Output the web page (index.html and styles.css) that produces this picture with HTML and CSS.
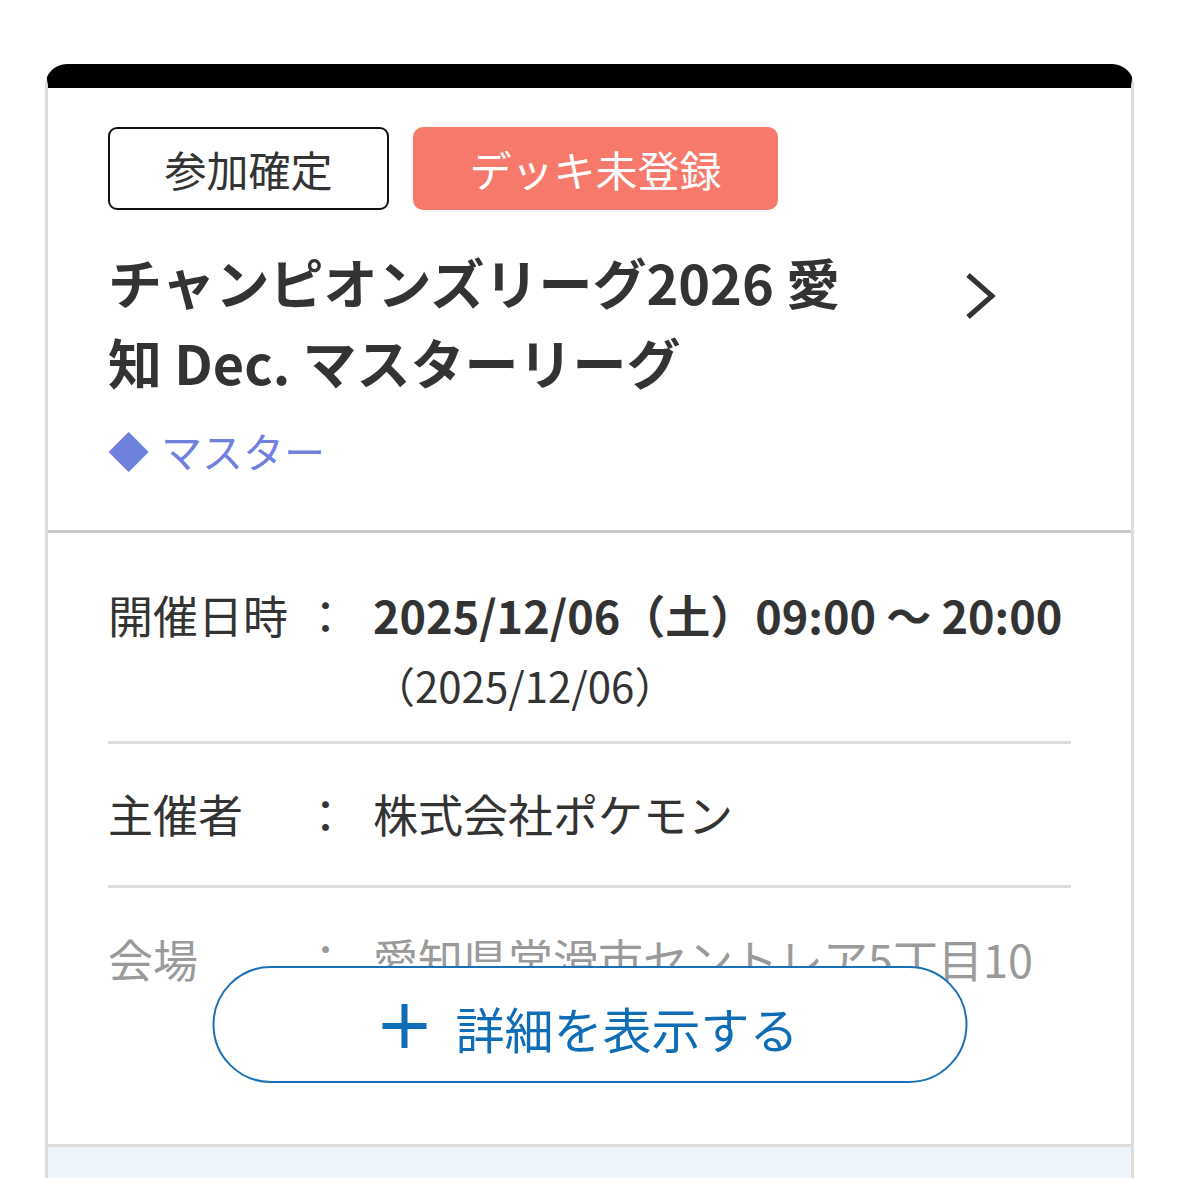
FILE: index.html
```html
<!DOCTYPE html>
<html lang="ja">
<head>
<meta charset="utf-8">
<title>イベント</title>
<link rel="stylesheet" href="styles.css">
</head>
<body>
<div class="page">
  <div class="card">
    <div class="head">
      <div class="tags">
        <span class="tag tag-confirmed">参加確定</span>
        <span class="tag tag-deck">デッキ未登録</span>
      </div>
      <div class="title-row">
        <h1 class="title">チャンピオンズリーグ2026 愛知 Dec. マスターリーグ</h1>
        <div class="chev">
          <svg width="34" height="48" viewBox="0 0 34 48"><path d="M4 3 L28 24 L4 45" fill="none" stroke="#333" stroke-width="5"/></svg>
        </div>
      </div>
      <div class="league"><span class="dia">◆</span>マスター</div>
    </div>
    <div class="details">
      <div class="row row-date">
        <div class="label">開催日時</div>
        <div class="colon">：</div>
        <div class="value">
          <div class="strong">2025/12/06（土）09:00 〜 20:00</div>
          <div class="sub">（2025/12/06）</div>
        </div>
      </div>
      <div class="row row-org">
        <div class="label">主催者</div>
        <div class="colon">：</div>
        <div class="value">株式会社ポケモン</div>
      </div>
      <div class="row row-venue">
        <div class="label">会場</div>
        <div class="colon">：</div>
        <div class="value">愛知県常滑市セントレア5丁目10</div>
      </div>
      <button class="more">
        <svg width="48" height="48" viewBox="0 0 48 48"><path d="M24 2 V46 M2 24 H46" stroke="#0e6db4" stroke-width="6" fill="none"/></svg>
        <span>詳細を表示する</span>
      </button>
    </div>
    <div class="foot"></div>
  </div>
</div>
</body>
</html>
```

FILE: styles.css
```css
* { box-sizing: border-box; }
html, body { margin: 0; padding: 0; background: #fff; }
body {
  font-family: "Noto Sans CJK JP", "Noto Sans", sans-serif;
  color: #333;
}
.page { padding: 64px 44px 0 45px; }
.card {
  border: 3px solid #dcdcdc;
  border-top: 24px solid #000;
  border-bottom: none;
  border-radius: 22px 22px 0 0;
  background: #fff;
}
.head {
  padding: 39px 60px 52px;
  border-bottom: 3px solid #c9c9c9;
}
.tags { display: flex; gap: 24px; }
.tag {
  display: inline-flex;
  align-items: center;
  justify-content: center;
  height: 83px;
  font-size: 42px;
  line-height: 1;
}
.tag-confirmed {
  width: 281px;
  border: 2px solid #111;
  border-radius: 9px;
  color: #333;
}
.tag-deck {
  width: 365px;
  background: #f7796b;
  color: #fff;
  border-radius: 10px;
}
.title-row {
  display: flex;
  align-items: flex-start;
  margin-top: 32px;
}
.title {
  margin: 0;
  width: 760px;
  font-size: 54px;
  line-height: 80px;
  font-weight: 700;
  color: #333;
}
.chev {
  margin-left: 96px;
  margin-top: 30px;
}
.chev svg { display: block; }
.league {
  margin-top: 20px;
  font-size: 41px;
  line-height: 56px;
  color: #6f80dd;
}
.dia { margin-right: 12px; }
.details {
  position: relative;
  height: 611px;
  overflow: hidden;
  padding: 0 60px;
}
.row {
  display: grid;
  grid-template-columns: 195px 44px 1fr;
  font-size: 45px;
  line-height: 64px;
  border-bottom: 3px solid #dddddd;
}
.value { padding-left: 26px; white-space: nowrap; }
.row-date { padding: 50px 0 24px; }
.row-org { padding: 38px 0 39px; }
.row-venue { padding: 39px 0 36px; border-bottom: none; color: #9a9a9a; }
.strong { font-weight: 700; font-size: 45px; }
.sub { margin-top: 6px; font-size: 42px; }
.more {
  position: absolute;
  left: 50%;
  bottom: 61px;
  transform: translateX(-50%);
  width: 755px;
  height: 117px;
  border: 2px solid #1a70b6;
  border-radius: 60px;
  background: #fff;
  display: flex;
  align-items: center;
  justify-content: center;
  gap: 27px;
  font-family: inherit;
  font-size: 49px;
  line-height: 1;
  color: #0e6db4;
  padding: 6px 0 0;
  cursor: pointer;
}
.more svg { display: block; margin-top: -4px; }
.foot {
  height: 40px;
  border-top: 3px solid #dddddd;
  background: #edf4fa;
}
```
